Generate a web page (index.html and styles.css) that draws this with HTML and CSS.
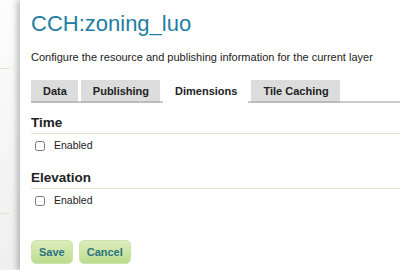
FILE: index.html
```html
<!DOCTYPE html>
<html lang="en">
<head>
  <meta charset="UTF-8">
  <title>Edit Layer</title>
  <link rel="stylesheet" href="styles.css">
</head>
<body>
  <div class="page">
    <div class="sidebar">
      <div class="side-rule first"></div>
      <div class="side-rule second"></div>
    </div>

    <div class="main">
      <h1>CCH:zoning_luo</h1>
      <p class="intro">Configure the resource and publishing information for the current layer</p>

      <ul class="tabs">
        <li>Data</li>
        <li>Publishing</li>
        <li class="active">Dimensions</li>
        <li>Tile Caching</li>
      </ul>

      <h3>Time</h3>
      <label class="check"><input type="checkbox"> Enabled</label>

      <h3>Elevation</h3>
      <label class="check"><input type="checkbox"> Enabled</label>

      <div class="buttons">
        <button>Save</button>
        <button>Cancel</button>
      </div>
    </div>
  </div>
</body>
</html>
```

FILE: styles.css
```css
body {
  margin: 0;
  font-family: "Liberation Sans", Arial, sans-serif;
  color: #222;
  background: #fff;
}

.page {
  display: flex;
  height: 270px;
  overflow: hidden;
}

.sidebar {
  width: 20px;
  flex-shrink: 0;
  background: linear-gradient(to bottom, #fdfdfd, #efefef);
  padding-top: 68px;
}

.side-rule {
  width: 10px;
  height: 1px;
  background: #dfe6cf;
}

.side-rule.second {
  margin-top: 144px;
}

.main {
  flex: 1;
  padding: 10px 0 0 11px;
  box-shadow: -3px 0 6px rgba(0,0,0,0.25);
  background: #fff;
}

h1 {
  margin: 0;
  font-weight: normal;
  font-size: 22px;
  line-height: 28px;
  color: #1f7ea3;
}

.intro {
  margin: 13px 0 0;
  font-size: 11px;
  line-height: 13px;
}

.tabs {
  list-style: none;
  margin: 16px 0 0;
  padding: 0;
  display: flex;
  gap: 3px;
  border-bottom: 2px solid #cacaca;
}

.tabs li {
  padding: 5px 11px 3px 12px;
  line-height: 13px;
  background: #dcdcdc;
  font-weight: bold;
  font-size: 11px;
  border-bottom: 2px solid #bcbcbc;
  margin-bottom: -2px;
}

.tabs li.active {
  background: #fff;
  border-bottom-color: #fff;
}

h3 {
  margin: 12px 0 0;
  font-size: 13.5px;
  line-height: 16px;
  padding-bottom: 2px;
  border-bottom: 1px solid #dfe6cf;
}

.check {
  display: flex;
  align-items: center;
  gap: 9px;
  margin: 5px 0 0 4px;
  padding-bottom: 6px;
  font-size: 10.5px;
  line-height: 13px;
}

.check input {
  margin: 0;
  width: 10px;
  height: 10px;
}

.buttons {
  margin-top: 27px;
  display: flex;
  gap: 6px;
}

button {
  font-family: "Liberation Sans", Arial, sans-serif;
  font-weight: bold;
  font-size: 11px;
  line-height: 13px;
  color: #2a7480;
  padding: 5px 7px 4px;
  border: 1px solid #cfe3ad;
  border-radius: 5px;
  background: linear-gradient(to bottom, #dcedbd, #bcdc8c);
}
```
